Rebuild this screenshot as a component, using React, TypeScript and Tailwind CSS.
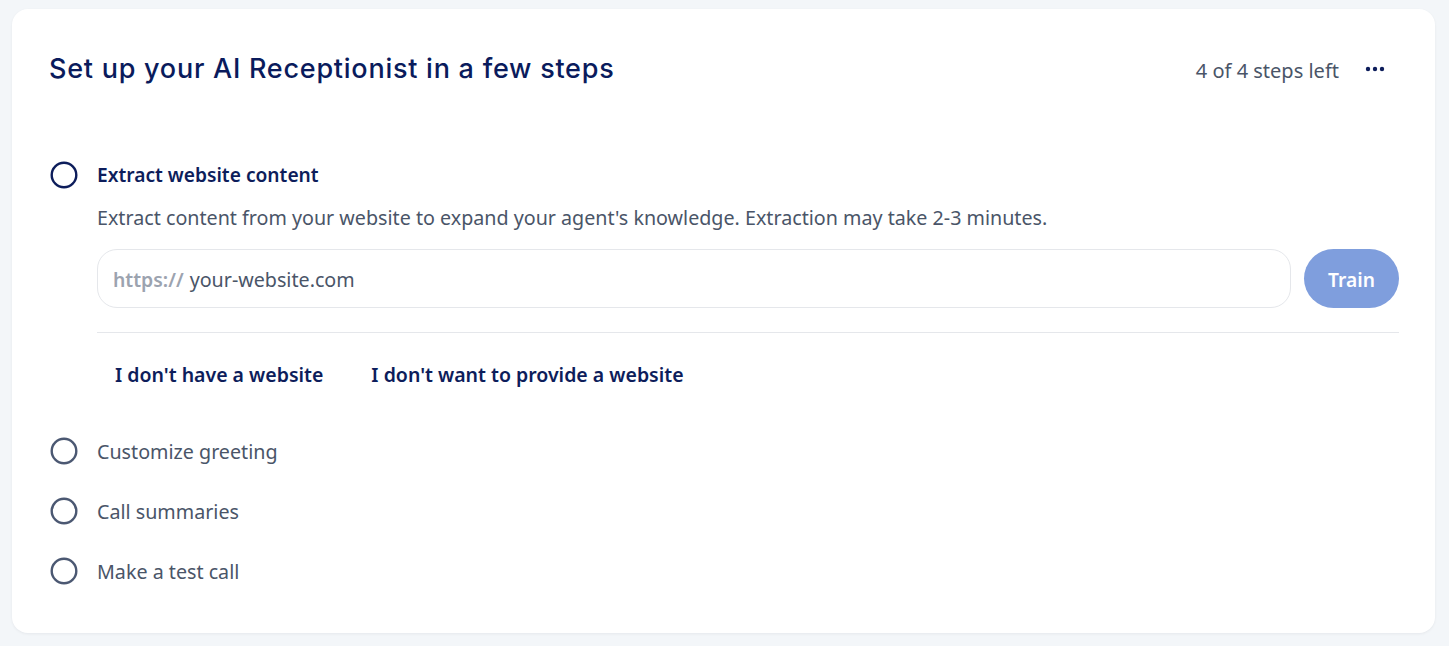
import React from "react";

const body = { fontFamily: '"Noto Sans", "Open Sans", Arial, sans-serif' };

function Circle({ active }: { active?: boolean }) {
  return (
    <svg width="28" height="28" viewBox="0 0 28 28" className="shrink-0">
      <circle
        cx="14"
        cy="14"
        r="12.3"
        fill="none"
        stroke={active ? "#0d1d5b" : "#4b5872"}
        strokeWidth="2.4"
      />
    </svg>
  );
}

function Step({ label }: { label: string }) {
  return (
    <div className="flex h-[28px] items-center gap-[19px] pl-[1px]">
      <Circle />
      <span className="pt-[2px] text-[19.7px] text-[#4a5568]">{label}</span>
    </div>
  );
}

export default function App() {
  return (
    <div
      className="min-h-[646px] bg-[#f3f6f9] pt-[9px] pl-[12px] pr-[14px] pb-[13px]"
      style={body}
    >
      <div className="rounded-[16px] bg-white pt-[44px] pb-[48px] pl-[37px] pr-[36px] shadow-[0_1px_3px_rgba(15,23,42,0.06)]">
        {/* header */}
        <div className="flex h-[32px] items-center justify-between">
          <h1
            className="text-[27px] font-[450] tracking-[0.75px] text-[#0a1b5c]"
            style={{ fontFamily: 'Inter, "Noto Sans", sans-serif' }}
          >
            Set up your AI Receptionist in a few steps
          </h1>
          <div className="flex items-center">
            <span className="pt-[4px] text-[20px] text-[#4a5568]">4 of 4 steps left</span>
            <button className="ml-[20px] mr-[8px] flex h-8 w-8 items-center justify-center">
              <svg width="20" height="6" viewBox="0 0 20 6">
                <circle cx="3" cy="3" r="2.2" fill="#0d1d5b" />
                <circle cx="10" cy="3" r="2.2" fill="#0d1d5b" />
                <circle cx="17" cy="3" r="2.2" fill="#0d1d5b" />
              </svg>
            </button>
          </div>
        </div>

        {/* active step */}
        <div className="mt-[76px]">
          <div className="flex h-[28px] items-center gap-[19px] pl-[1px]">
            <Circle active />
            <span className="pt-[1px] text-[19.2px] font-semibold text-[#0d1d5b]">
              Extract website content
            </span>
          </div>
          <div className="pl-[48px]">
            <p className="mt-[15px] text-[19.7px] leading-[28px] text-[#4a5568]">
              Extract content from your website to expand your agent's knowledge. Extraction
              may take 2-3 minutes.
            </p>
            <div className="mt-[17px] flex gap-[13px]">
              <div className="flex h-[59px] flex-1 items-center rounded-[20px] border border-[#e5e7eb] px-[15px] pt-[3px]">
                <span className="text-[19.4px] font-semibold text-[#9ca3af]">https://</span>
                <span className="ml-[6px] text-[19.7px] text-[#4a5568]">your-website.com</span>
              </div>
              <button className="h-[59px] w-[95px] rounded-full bg-[#7f9edd] pt-[3px] text-[19.2px] font-semibold text-white">
                Train
              </button>
            </div>
            <div className="mt-[24px] border-t border-[#e5e7eb]" />
            <div className="mt-[27px] flex gap-[12px]">
              <button className="h-[28px] px-[18px] text-[19.5px] font-semibold text-[#0d1d5b]">
                I don't have a website
              </button>
              <button className="h-[28px] px-[18px] text-[19.5px] font-semibold text-[#0d1d5b]">
                I don't want to provide a website
              </button>
            </div>
          </div>
        </div>

        {/* remaining steps */}
        <div className="mt-[49px] flex flex-col gap-[32px]">
          <Step label="Customize greeting" />
          <Step label="Call summaries" />
          <Step label="Make a test call" />
        </div>
      </div>
    </div>
  );
}
